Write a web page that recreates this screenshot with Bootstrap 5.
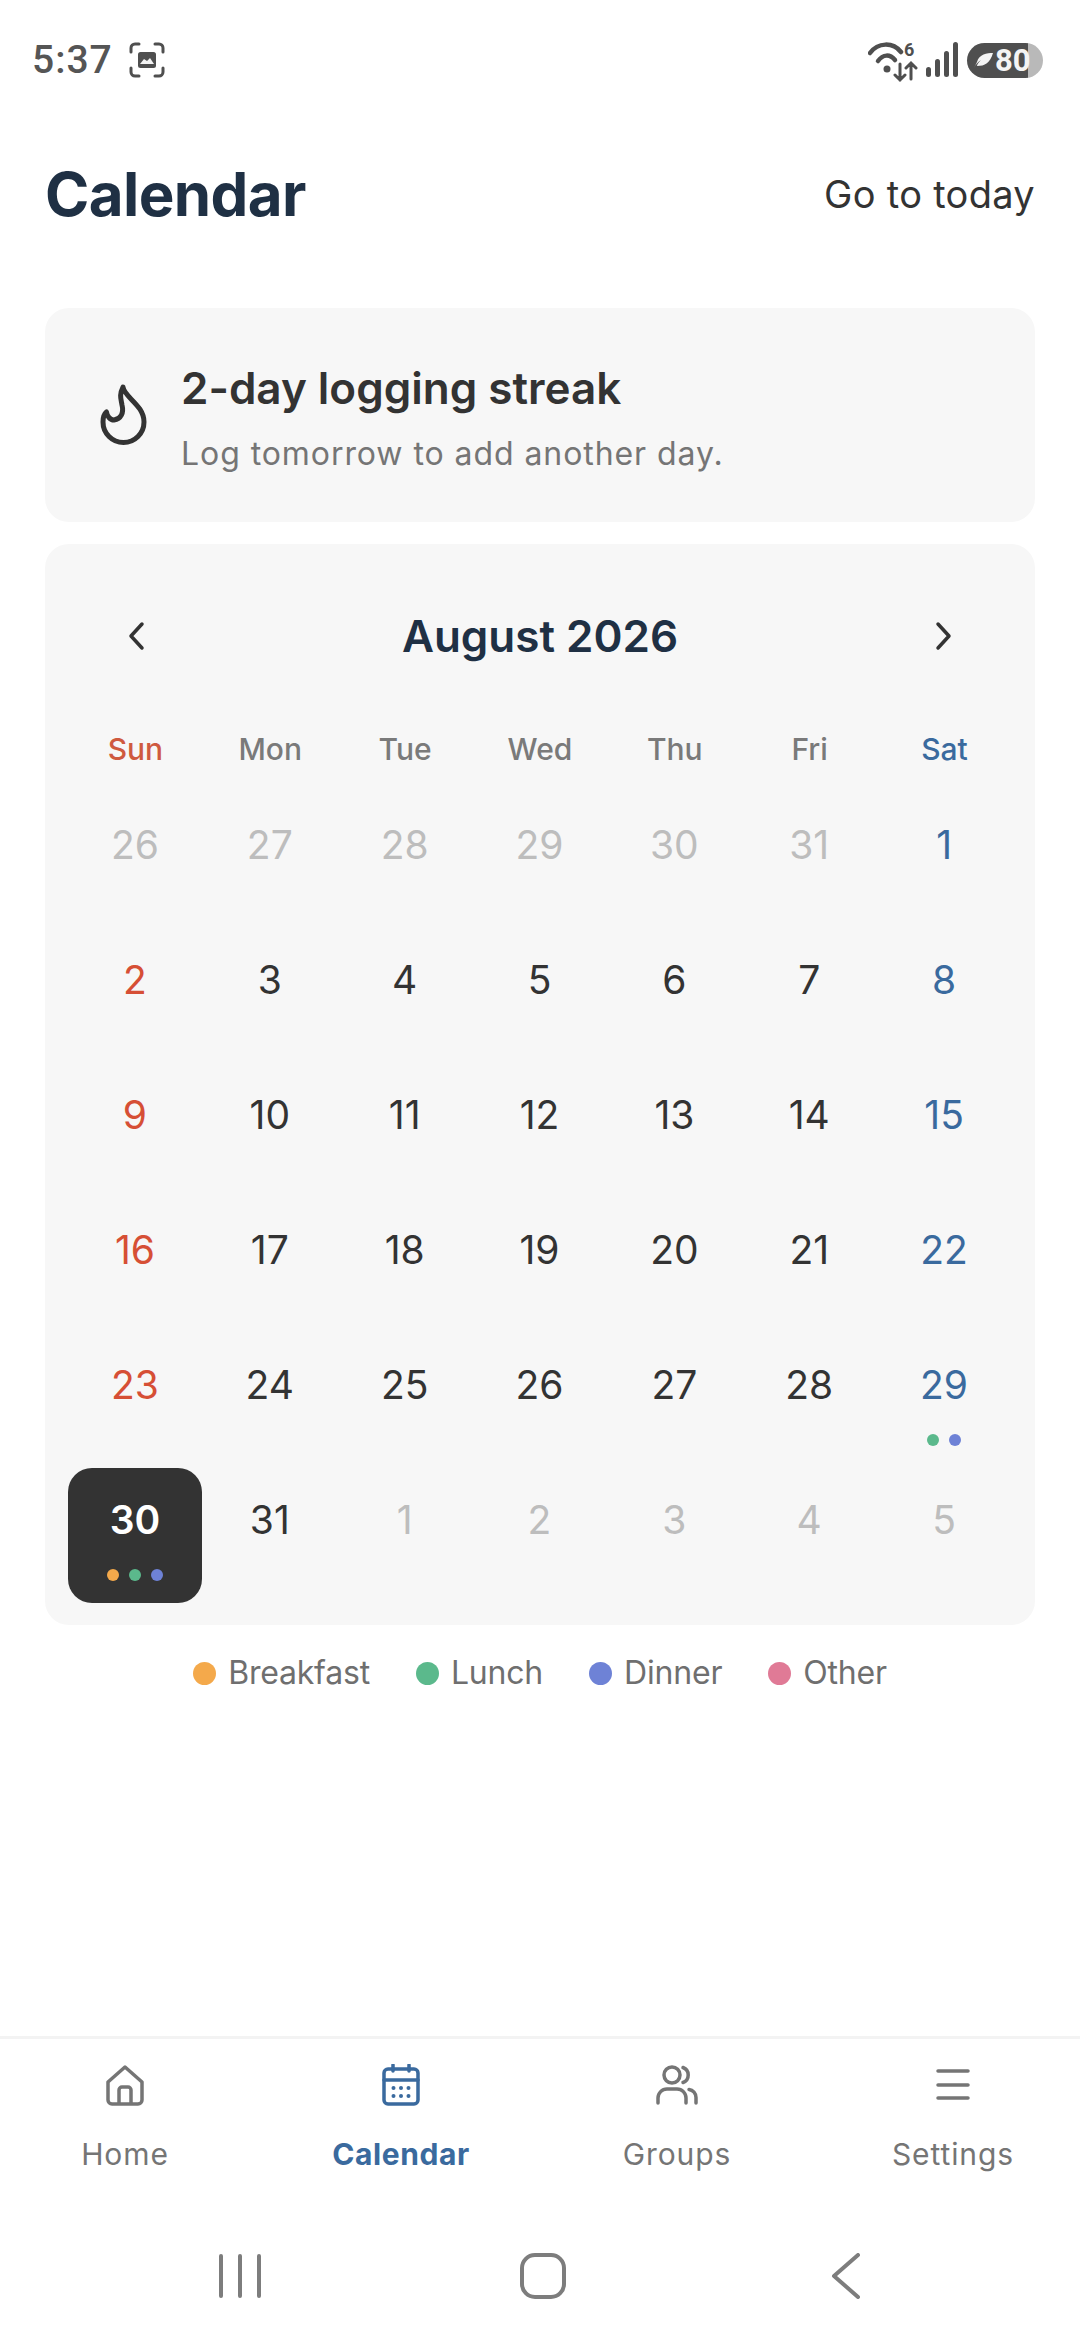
<!DOCTYPE html>
<html lang="en">
<head>
  <meta charset="UTF-8" />
  <meta name="viewport" content="width=device-width, initial-scale=1" />
  <title>Calendar</title>
  <link href="https://cdn.jsdelivr.net/npm/bootstrap@5.3.0/dist/css/bootstrap.min.css" rel="stylesheet" />
  <style>
    html, body { height: 100%; overflow: hidden; }
    body { font-family: Inter, "Liberation Sans", sans-serif; color: #333; background: #fff; }
    .app-page { height: 2340px; width: 1080px; }

    /* status bar */
    .status-row { height: 120px; padding: 0 37px 0 32px; color: #555; }
    .status-time { font-family: Roboto, sans-serif; font-size: 39px; font-weight: 500; letter-spacing: 1px; }
    .batt { width: 76px; height: 35px; border-radius: 18px; background: linear-gradient(90deg, #4f4f4f 0 80%, #b9b9b9 80% 100%); color: #f4f4f4; font-family: Roboto, sans-serif; font-weight: 700; font-size: 31px; line-height: 35px; padding-left: 6px; }
    .wifi-icon { margin-top: -4px; }

    /* header */
    .head-row { height: 148px; padding: 0 45px; }
    .head-title { font-size: 60px; font-weight: 700; color: #1f3044; letter-spacing: -0.6px; margin: 0; }
    .head-link { font-size: 38px; color: #333; letter-spacing: 0.3px; }

    /* cards */
    .soft-card { background: #f7f7f7; border-radius: 24px; margin: 0 45px; }
    .streak-card { height: 214px; margin-top: 40px; padding-left: 52px; }
    .streak-icon { margin-right: 34px; }
    .streak-name { font-size: 44px; font-weight: 600; line-height: 60px; color: #333; margin-top: 3px; }
    .streak-sub { font-size: 32px; line-height: 44px; color: #757575; letter-spacing: 0.93px; margin-top: 14px; }
    .cal-card { margin-top: 22px; height: 1081px; padding: 0 23px; }
    .cal-top { height: 184px; padding: 0 58px; }
    .cal-month { font-size: 44px; font-weight: 600; color: #1f3044; }
    .week-row { height: 65px; padding-top: 1px; }
    .week-name { width: calc(100% / 7); text-align: center; font-size: 30px; font-weight: 500; line-height: 40px; color: #7a7a7a; }
    .day-grid { display: grid; grid-template-columns: repeat(7, 1fr); grid-auto-rows: 135px; }
    .day-cell { padding-top: 26px; text-align: center; font-size: 39px; line-height: 52px; color: #333; border-radius: 24px; margin-right: 1px; }
    .dot-row { height: 12px; margin-top: 23px; gap: 10px; }
    .meal-dot { width: 12px; height: 12px; border-radius: 50%; }
    .sun { color: #d64f35; }
    .week-name.sun { color: #cf5a3f; }
    .sat, .week-name.sat { color: #3a6a9e; }
    .muted-day { color: #bdbdbd; }
    .today { background: #333; color: #fff; font-weight: 600; }
    .bf { background: #f4a94b; }
    .lu { background: #5bb98c; }
    .di { background: #6e82d6; }
    .ot { background: #e07a96; }

    /* legend */
    .legend-row { margin-top: 26px; gap: 46px; font-size: 32px; line-height: 44px; color: #6f6f6f; letter-spacing: -0.2px; }
    .legend-dot { width: 23px; height: 23px; border-radius: 50%; margin-right: 12px; }

    /* bottom tabs */
    .tabs-wrap { margin-top: auto; border-top: 3px solid #f3f3f3; height: 304px; }
    .tabs-row { margin: 0 -11px 0 -13px; padding-top: 25px; }
    .tab-item { flex: 1 1 0; text-align: center; color: #757575; font-size: 30px; line-height: 40px; letter-spacing: 0.9px; text-decoration: none; }
    .tab-item svg { display: block; margin: 0 auto 28px; }
    .tab-active { color: #3a6a9e; font-weight: 700; letter-spacing: 0.6px; }
    .sys-row { margin-top: 79px; padding-left: 6px; }
    .sys-slot { width: 303px; }
    .sys-row svg { display: block; }
  </style>
</head>
<body>
  <div class="app-page d-flex flex-column">
    <!-- Status bar -->
    <div class="status-row d-flex align-items-center justify-content-between">
      <div class="d-flex align-items-center gap-3">
        <span class="status-time">5:37</span>
        <svg width="36" height="36" viewBox="0 0 36 36" fill="none" stroke="#4f4f4f" stroke-width="3" stroke-linecap="round">
          <path d="M2 10V6a4 4 0 0 1 4-4h4M26 2h4a4 4 0 0 1 4 4v4M34 26v4a4 4 0 0 1-4 4h-4M10 34H6a4 4 0 0 1-4-4v-4"/>
          <rect x="9" y="10" width="18" height="16" rx="2.5" fill="#4f4f4f" stroke="none"/>
          <path d="M11 22l4-5 3 2 3-3 4 6" fill="#f4f4f4" stroke="none"/>
        </svg>
      </div>
      <div class="d-flex align-items-center">
        <svg class="wifi-icon" width="50" height="50" viewBox="0 -8 50 50" fill="none" stroke="#4f4f4f" stroke-linecap="round">
          <path d="M2 12C10 1 25 1 33 11" stroke-width="4.500"/>
          <path d="M10 20C15 13 22 13 27 19" stroke-width="4.500"/>
          <circle cx="19" cy="28" r="3.500" fill="#4f4f4f" stroke="none"/>
          <path d="M32 23v16M27 34l5 5 5-5M43 38V22M38 27l5-5 5 5" stroke-width="3"/>
          <text x="36" y="15" fill="#4f4f4f" stroke="none" font-family="Roboto, sans-serif" font-weight="700" font-size="18">6</text>
        </svg>
        <svg class="ms-2 me-2" width="33" height="36" viewBox="0 0 33 36" fill="#4f4f4f">
          <rect x="0" y="25" width="5" height="10" rx="2.500"/><rect x="9" y="17" width="5" height="18" rx="2.500"/><rect x="18" y="9" width="5" height="26" rx="2.500"/><rect x="27" y="0" width="5" height="35" rx="2.500"/>
        </svg>
        <div class="batt d-flex align-items-center">
          <svg width="22" height="20" viewBox="0 0 22 18" fill="#f4f4f4"><path d="M1 17C3 13 5 11 8 9 5 12 4 14 4 15 12 15 17 12 20 2 14 2 6 3 4 11Z"/></svg>
          <span>80</span>
        </div>
      </div>
    </div>

    <!-- Header -->
    <div class="head-row d-flex align-items-center justify-content-between">
      <h1 class="head-title">Calendar</h1>
      <span class="head-link">Go to today</span>
    </div>

    <!-- Streak -->
    <div class="soft-card streak-card d-flex align-items-center">
      <svg class="streak-icon flex-shrink-0" width="50" height="64" viewBox="0 0 50 64" fill="none" stroke="#333" stroke-width="5" stroke-linejoin="round">
        <path d="M26 4C27 14 47 22 47 39A20.500 20.500 0 0 1 6 39C6 34 7 31 9.500 29C10 33 13 37 17 37C24 36 27 30 25 22C24 16 22 12 26 4Z"/>
      </svg>
      <div>
        <div class="streak-name">2-day logging streak</div>
        <div class="streak-sub">Log tomorrow to add another day.</div>
      </div>
    </div>

    <!-- Calendar -->
    <div class="soft-card cal-card">
      <div class="cal-top d-flex align-items-center justify-content-between">
        <svg width="20" height="34" viewBox="0 0 20 34" fill="none" stroke="#333" stroke-width="3.500" stroke-linecap="round" stroke-linejoin="round"><path d="M16 5L5 17l11 12"/></svg>
        <span class="cal-month">August 2026</span>
        <svg width="20" height="34" viewBox="0 0 20 34" fill="none" stroke="#333" stroke-width="3.500" stroke-linecap="round" stroke-linejoin="round"><path d="M4 5l11 12L4 29"/></svg>
      </div>
      <div class="week-row d-flex">
        <div class="week-name sun">Sun</div>
        <div class="week-name">Mon</div>
        <div class="week-name">Tue</div>
        <div class="week-name">Wed</div>
        <div class="week-name">Thu</div>
        <div class="week-name">Fri</div>
        <div class="week-name sat">Sat</div>
      </div>
      <div class="day-grid" id="days"></div>
    </div>

    <!-- Legend -->
    <div class="legend-row d-flex justify-content-center">
      <div class="d-flex align-items-center"><span class="legend-dot bf"></span>Breakfast</div>
      <div class="d-flex align-items-center"><span class="legend-dot lu"></span>Lunch</div>
      <div class="d-flex align-items-center"><span class="legend-dot di"></span>Dinner</div>
      <div class="d-flex align-items-center"><span class="legend-dot ot"></span>Other</div>
    </div>

    <!-- Bottom tabs -->
    <div class="tabs-wrap">
      <div class="tabs-row d-flex">
        <a class="tab-item" href="#">
          <svg width="38" height="42" viewBox="0 0 38 42" fill="none" stroke="#757575" stroke-width="3.500" stroke-linejoin="round">
            <path d="M2 18L19 3l17 15v18a4 4 0 0 1-4 4H6a4 4 0 0 1-4-4Z"/><path d="M13 40V26a3 3 0 0 1 3-3h6a3 3 0 0 1 3 3v14"/>
          </svg>
          Home
        </a>
        <a class="tab-item tab-active" href="#">
          <svg width="38" height="42" viewBox="0 0 38 42" fill="none" stroke="#3a6a9e" stroke-width="3.500" stroke-linecap="round">
            <rect x="2" y="5" width="34" height="35" rx="4"/><path d="M2 16h34M11 1v6M27 1v6"/>
            <g fill="#3a6a9e" stroke="none"><circle cx="11.500" cy="24" r="2"/><circle cx="19" cy="24" r="2"/><circle cx="26.500" cy="24" r="2"/><circle cx="11.500" cy="32" r="2"/><circle cx="19" cy="32" r="2"/><circle cx="26.500" cy="32" r="2"/></g>
          </svg>
          Calendar
        </a>
        <a class="tab-item" href="#">
          <svg width="42" height="42" viewBox="0 0 42 42" fill="none" stroke="#757575" stroke-width="3.500" stroke-linecap="round">
            <circle cx="16" cy="11" r="8"/><path d="M27 3.500a8 8 0 0 1 0 15"/><path d="M2 39v-5a9 9 0 0 1 9-9h10a9 9 0 0 1 9 9v5"/><path d="M33 25.500a8 8 0 0 1 7 8v5.500"/>
          </svg>
          Groups
        </a>
        <a class="tab-item" href="#">
          <svg width="34" height="42" viewBox="0 0 34 42" fill="none" stroke="#757575" stroke-width="3.500" stroke-linecap="round">
            <path d="M2 7h30M2 21h30M2 34h30"/>
          </svg>
          Settings
        </a>
      </div>
      <div class="sys-row d-flex align-items-center justify-content-center">
        <div class="sys-slot d-flex justify-content-center">
          <svg width="42" height="44" viewBox="0 0 42 44" fill="none" stroke="#7d7d7d" stroke-width="4" stroke-linecap="round"><path d="M2 2v40M21 2v40M40 2v40"/></svg>
        </div>
        <div class="sys-slot d-flex justify-content-center">
          <svg width="46" height="46" viewBox="0 0 46 46" fill="none" stroke="#7d7d7d" stroke-width="4"><rect x="2" y="2" width="42" height="42" rx="13"/></svg>
        </div>
        <div class="sys-slot d-flex justify-content-center">
          <svg width="30" height="46" viewBox="0 0 30 46" fill="none" stroke="#7d7d7d" stroke-width="4" stroke-linecap="round" stroke-linejoin="round"><path d="M27 2L3 23l24 21"/></svg>
        </div>
      </div>
    </div>
  </div>

  <script src="https://cdn.jsdelivr.net/npm/bootstrap@5.3.0/dist/js/bootstrap.bundle.min.js"></script>
  <script>
    // August 2026 plus the trailing days of the months around it
    var days = [26,27,28,29,30,31,1,2,3,4,5,6,7,8,9,10,11,12,13,14,15,16,17,18,19,20,21,22,23,24,25,26,27,28,29,30,31,1,2,3,4,5];
    var dots = { 34: ['lu', 'di'], 35: ['bf', 'lu', 'di'] };
    var html = '';
    days.forEach(function (d, i) {
      var cls = 'day-cell';
      if (i < 6 || i > 36) cls += ' muted-day';
      else if (i % 7 === 0) cls += ' sun';
      else if (i % 7 === 6) cls += ' sat';
      if (i === 35) cls += ' today';
      var row = '';
      if (dots[i]) {
        row = '<div class="dot-row d-flex justify-content-center">' + dots[i].map(function (c) {
          return '<span class="meal-dot ' + c + '"></span>';
        }).join('') + '</div>';
      }
      html += '<div class="' + cls + '">' + d + row + '</div>';
    });
    document.getElementById('days').innerHTML = html;
  </script>
</body>
</html>
